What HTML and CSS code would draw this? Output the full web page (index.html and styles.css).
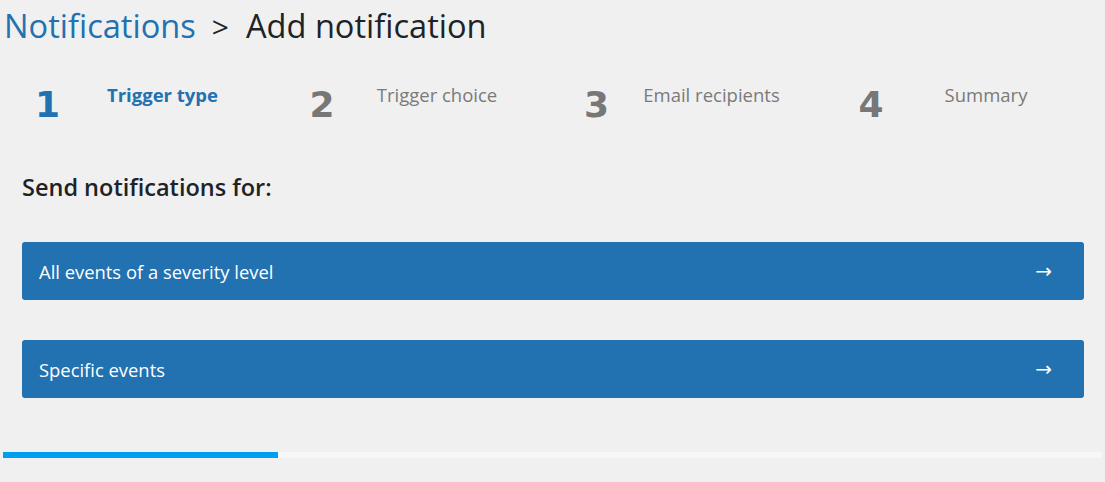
FILE: index.html
```html
<!DOCTYPE html>
<html lang="en">
<head>
<meta charset="utf-8">
<title>Add notification</title>
<link rel="stylesheet" href="styles.css">
</head>
<body>
<div class="page">
  <h1 class="title"><a class="crumb" href="#">Notifications</a><span class="sep">&gt;</span><span class="current">Add notification</span></h1>
  <ol class="steps">
    <li class="step active"><span class="num">1</span><span class="label">Trigger type</span></li>
    <li class="step"><span class="num">2</span><span class="label">Trigger choice</span></li>
    <li class="step"><span class="num">3</span><span class="label">Email recipients</span></li>
    <li class="step"><span class="num">4</span><span class="label">Summary</span></li>
  </ol>
  <section class="content">
    <h2 class="heading">Send notifications for:</h2>
    <div class="choices">
      <button class="choice" type="button"><span>All events of a severity level</span><span class="arrow">&rarr;</span></button>
      <button class="choice" type="button"><span>Specific events</span><span class="arrow">&rarr;</span></button>
    </div>
  </section>
  <div class="progress"><div class="progress-fill" style="width:25%"></div></div>
</div>
</body>
</html>
```
FILE: styles.css
```css
html, body {
  margin: 0;
  padding: 0;
  background: #f0f0f0;
}
body {
  font-family: "Open Sans", "Noto Sans", sans-serif;
  color: #1d2327;
}
.page {
  padding: 0 3px 0 3px;
}
.title {
  margin: 0;
  padding: 4px 0 0 1px;
  font-size: 32.6px;
  font-weight: 400;
  line-height: 44px;
  display: flex;
  align-items: baseline;
}
.crumb {
  color: #2271b1;
  text-decoration: none;
}
.sep {
  margin: 0 17px 0 16px;
  font-size: 30px;
}
.current {
  color: #1d2327;
}
.steps {
  list-style: none;
  margin: 34px 0 0 1px;
  padding: 0;
  display: flex;
}
.step {
  width: 276px;
  display: flex;
  align-items: flex-start;
}
.num {
  width: 87px;
  text-align: center;
  font-family: "DejaVu Sans", sans-serif;
  font-weight: 700;
  font-size: 36px;
  line-height: 40px;
  color: #777;
  margin-top: 2px;
}
.label {
  width: 143px;
  text-align: center;
  font-size: 18.5px;
  line-height: 24px;
  color: #7a7a7a;
}
.step.active .num,
.step.active .label {
  color: #2271b1;
}
.step.active .label {
  font-weight: 700;
}
.content {
  padding: 0 18px 0 19px;
  margin-top: 46px;
}
.heading {
  margin: 0;
  font-size: 23.5px;
  font-weight: 600;
  line-height: 32px;
  color: #1d2327;
}
.choices {
  margin-top: 39px;
  display: flex;
  flex-direction: column;
  gap: 40px;
}
.choice {
  display: flex;
  justify-content: space-between;
  align-items: center;
  height: 58px;
  padding: 0 32px 0 17px;
  border: none;
  border-radius: 3px;
  background: #2271b1;
  color: #fff;
  font-family: "Open Sans", "Noto Sans", sans-serif;
  font-size: 18.4px;
  text-align: left;
  cursor: pointer;
}
.arrow {
  font-family: "DejaVu Sans", sans-serif;
  font-size: 20px;
}
.progress {
  margin-top: 54px;
  height: 6px;
  width: 1099px;
  background: #f6f7f9;
}
.progress-fill {
  height: 100%;
  background: #009ef0;
}
```
